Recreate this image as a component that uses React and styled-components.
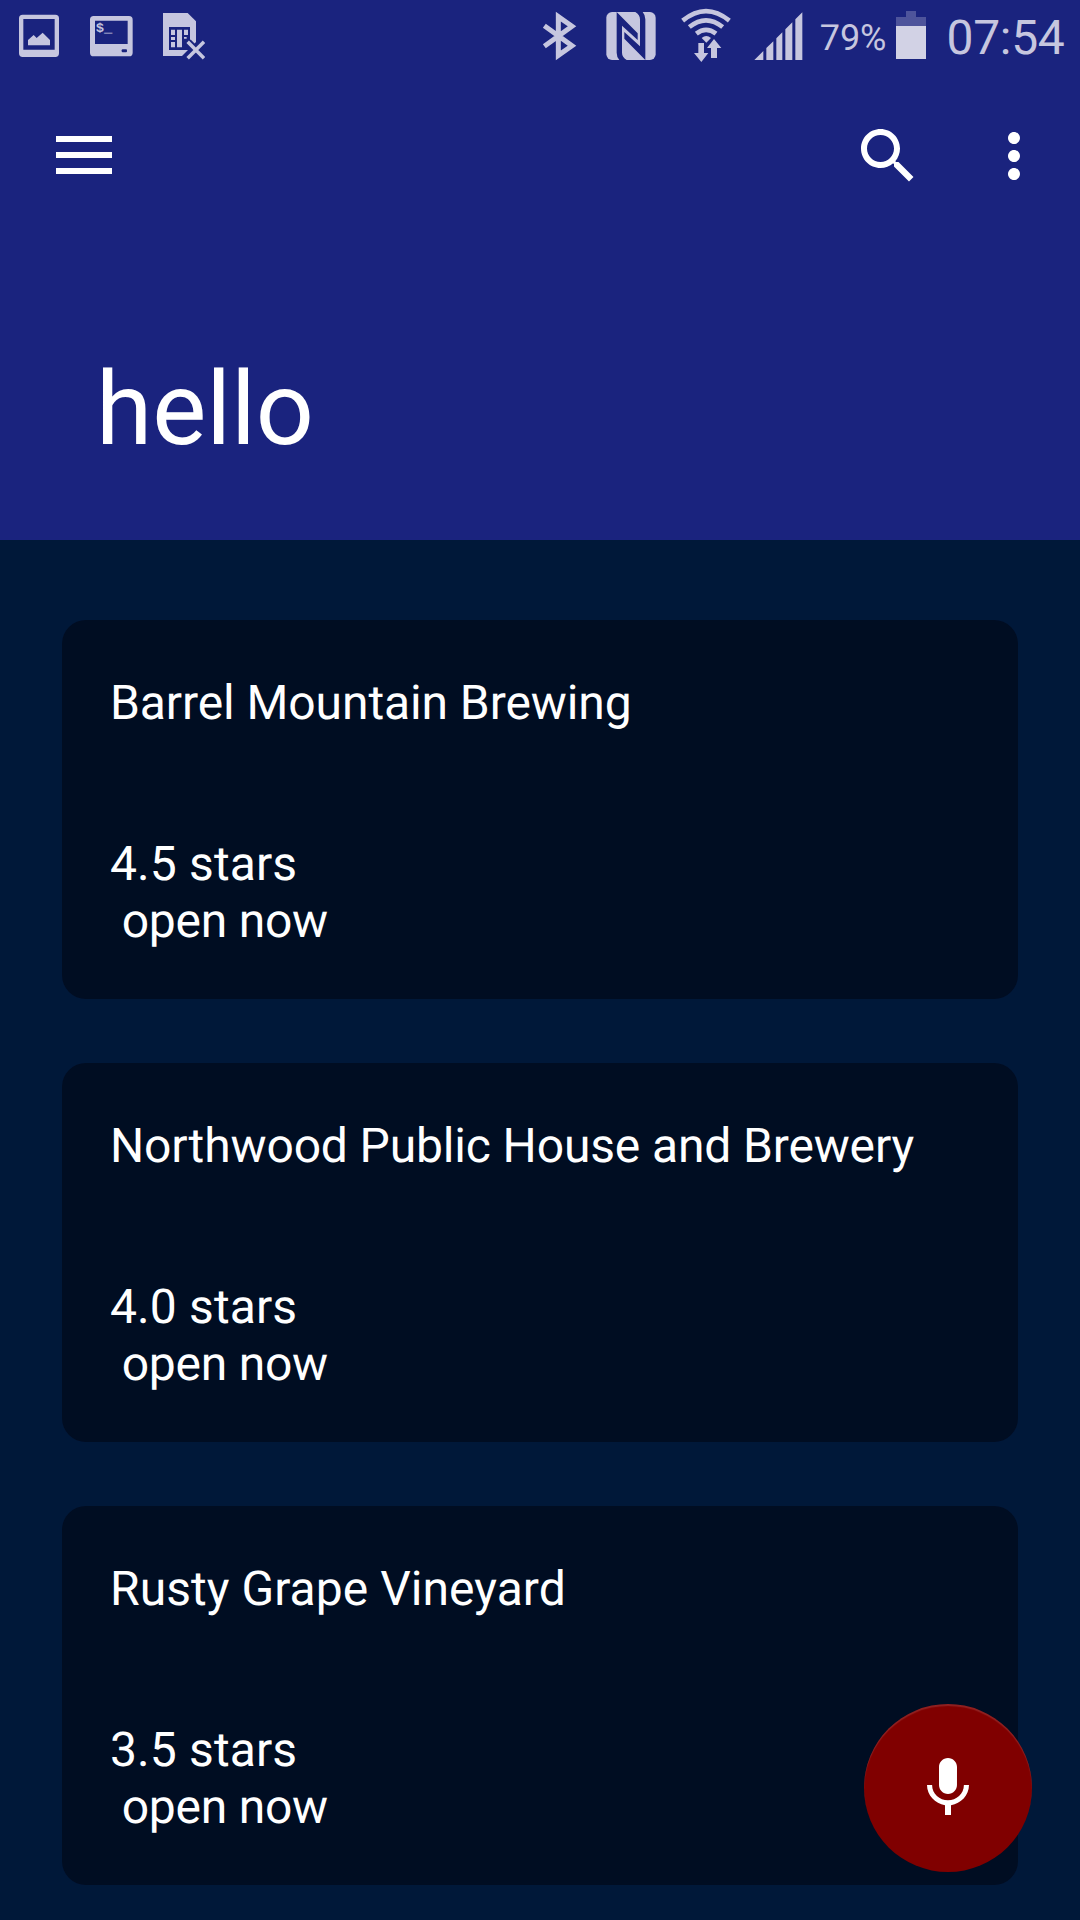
import React from "react";
import styled, { createGlobalStyle } from "styled-components";

const ink = "#c6c6df";
const primary = "#1a237e";

const GlobalStyle = createGlobalStyle`
  body { margin: 0; background: #001839; font-family: Roboto, "Noto Sans", sans-serif; text-rendering: geometricPrecision; }
  * { box-sizing: border-box; }
`;

const Screen = styled.main`
  position: relative;
  width: 1080px;
  height: 1920px;
  overflow: hidden;
  background: #001839;
  color: #fff;
`;

const Header = styled.header`
  height: 540px;
  display: flex;
  flex-direction: column;
  background: ${primary};
`;

const StatusBar = styled.div`
  height: 75px;
  display: flex;
  padding: 0 13px 0 18px;
  color: ${ink};
`;

const StatusGlyph = styled.svg`
  display: block;
  flex: none;
  height: 75px;
  width: ${(p) => p.$w}px;
  margin-left: ${(p) => p.$gap || 0}px;
  fill: ${ink};
`;

const StatusText = styled.span`
  flex: none;
  width: ${(p) => p.$w}px;
  margin-left: ${(p) => p.$gap}px;
  font-size: ${(p) => p.$size}px;
  font-weight: 400;
  line-height: ${(p) => p.$line}px;
  letter-spacing: ${(p) => p.$tracking || 0}px;
  white-space: nowrap;
`;

const Toolbar = styled.nav`
  height: 162px;
  display: flex;
  align-items: center;
  padding: 0 30px 0 48px;
`;

const IconButton = styled.button`
  display: flex;
  padding: 0;
  border: 0;
  background: none;
  color: #fff;
  margin-left: ${(p) => p.$push || "0"};
  svg { display: block; width: 72px; height: 72px; fill: currentColor; }
`;

const Title = styled.h1`
  margin: 112px 0 0 96px;
  font-size: 102px;
  font-weight: 400;
  line-height: 120px;
`;

const List = styled.section`
  display: flex;
  flex-direction: column;
  gap: 64px;
  padding: 80px 62px 0;
`;

const Card = styled.article`
  height: 379px;
  padding: 54px 48px;
  border-radius: 24px;
  background: #000d22;
  font-size: 48px;
  line-height: 57px;
`;

const Name = styled.h2`
  margin: 0 0 104px;
  font-size: inherit;
  font-weight: 400;
  letter-spacing: ${(p) => p.$tracking}px;
`;

const Detail = styled.p`
  margin: 0;
  white-space: pre;
  letter-spacing: ${(p) => p.$tracking}px;
`;

const MicButton = styled.button`
  position: absolute;
  left: 864px;
  top: 1704px;
  width: 168px;
  height: 168px;
  display: flex;
  align-items: center;
  justify-content: center;
  padding: 0;
  border: 0;
  border-radius: 50%;
  background: #800000;
  box-shadow: inset 0 2px 1px rgba(255, 255, 255, 0.13);
  svg { display: block; width: 72px; height: 72px; fill: #fff; }
`;

const places = [
  { name: "Barrel Mountain Brewing", rating: "4.5", tracking: -0.09 },
  { name: "Northwood Public House and Brewery", rating: "4.0", tracking: -0.145 },
  { name: "Rusty Grape Vineyard", rating: "3.5", tracking: 0.05 },
];

function StatusIcons() {
  return (
    <StatusBar>
      <StatusGlyph $w={42} viewBox="54 0 126 225">
        <path fillRule="evenodd" d="M68 44H166Q177 44 177 55V160Q177 171 166 171H68Q57 171 57 160V55Q57 44 68 44ZM70 57V149H164V57Z" />
        <path d="M84 136V120L101 105L110 114L128 98L150 120V136Z" />
      </StatusGlyph>
      <StatusGlyph $w={44} $gap={29} viewBox="267 0 132 225">
        <path fillRule="evenodd" d="M281 48H387Q398 48 398 59V158Q398 169 387 169H281Q270 169 270 158V59Q270 48 281 48ZM285 62V132H383V62Z" />
        <rect x="365" y="148" width="16" height="9" rx="3" fill={primary} />
        <text x="287" y="95" fontSize="39" fontWeight="700" fontFamily="Liberation Mono, monospace" textLength="50" lengthAdjust="spacingAndGlyphs">$_</text>
      </StatusGlyph>
      <StatusGlyph $w={43} $gap={29} viewBox="486 0 129 225">
        <path d="M489 39H563L588 64V126L546 168H489Z" />
        <path fill={primary} d="M507 81H570V150H507Z" />
        <path d="M513 89H525V105H513ZM531 89H546V142H531ZM552 89H564V105H552ZM513 111H525V120H513ZM513 126H525V142H513ZM552 111H560V116H552Z" />
        <path d="M564 126L611 174M611 126L564 174" stroke={primary} strokeWidth="22" />
        <path d="M563 125L612 175M612 125L563 175" stroke={ink} strokeWidth="10.5" />
      </StatusGlyph>
      <StatusGlyph $w={35} $gap={337} viewBox="66 0 105 225">
        <path d="M73 77L156 137L115 166V50L156 79L73 139" fill="none" stroke={ink} strokeWidth="15" />
      </StatusGlyph>
      <StatusGlyph $w={50} $gap={29} viewBox="258 0 150 225">
        <rect x="259" y="36" width="148" height="144" rx="17" />
        <g fill={primary}>
          <path d="M290 36L353 100V120L306 77V158Q306 171 320 180H298Q290 171 290 158Z" />
          <path d="M376 180L313 116V96L360 139V58Q360 45 346 36H368Q376 45 376 58Z" />
        </g>
      </StatusGlyph>
      <StatusGlyph $w={50} $gap={25} viewBox="483 0 150 225">
        <g fill="none" stroke={ink} strokeWidth="14">
          <path d="M488 62Q558 5 628 62" />
          <path d="M508 81Q558 41 608 81" />
          <path d="M529 101Q558 78 588 101" />
        </g>
        <path d="M545 114Q559 102 573 114L559 128Z" />
        <path d="M535 129H552V159H565L544 186L522 159H535Z" />
        <path d="M582 117L604 144H591V174H573V144H561Z" />
      </StatusGlyph>
      <StatusGlyph $w={49} $gap={22.67} viewBox="701 0 147 225">
        <path d="M702 180L729 153V180ZM738 144L759 124V180H738ZM768 115L786 97V180H768ZM795 88L816 67V180H795ZM825 58L846 37V180H825Z" />
      </StatusGlyph>
      <StatusText $w={66} $gap={17} $size={36} $line={76}>79%</StatusText>
      <StatusGlyph $w={30} $gap={10.33} viewBox="288 0 90 225">
        <path d="M318 33H348V51H378V78H288V51H318Z" opacity="0.3" />
        <path d="M288 78H378V177H288Z" fill="#d2d2e5" />
      </StatusGlyph>
      <StatusText $w={120} $gap={20.5} $size={48} $line={75} $tracking={-0.3}>07:54</StatusText>
    </StatusBar>
  );
}

export default function App() {
  return (
    <Screen>
      <GlobalStyle />
      <Header>
        <StatusIcons />
        <Toolbar>
          <IconButton aria-label="Menu">
            <svg viewBox="0 0 72 72"><path d="M8 16h56v6H8zM8 32h56v6H8zM8 48h56v6H8z" /></svg>
          </IconButton>
          <IconButton aria-label="Search" $push="auto">
            <svg viewBox="0 0 24 24"><path d="M15.5 14h-.79l-.28-.27C15.41 12.59 16 11.11 16 9.5 16 5.91 13.09 3 9.5 3S3 5.91 3 9.5 5.91 16 9.5 16c1.61 0 3.09-.59 4.23-1.57l.27.28v.79l5 4.99L20.49 19l-4.99-5zm-6 0C7.01 14 5 11.99 5 9.5S7.01 5 9.5 5 14 7.01 14 9.5 11.99 14 9.5 14z" /></svg>
          </IconButton>
          <IconButton aria-label="More options" $push="54px">
            <svg viewBox="0 0 24 24"><path d="M12 8c1.1 0 2-.9 2-2s-.9-2-2-2-2 .9-2 2 .9 2 2 2zm0 2c-1.1 0-2 .9-2 2s.9 2 2 2 2-.9 2-2-.9-2-2-2zm0 6c-1.1 0-2 .9-2 2s.9 2 2 2 2-.9 2-2-.9-2-2-2z" /></svg>
          </IconButton>
        </Toolbar>
        <Title>hello</Title>
      </Header>
      <List>
        {places.map((place) => (
          <Card key={place.name}>
            <Name $tracking={place.tracking}>{place.name}</Name>
            <Detail $tracking={0.12}>{place.rating} stars</Detail>
            <Detail $tracking={-0.24}> open now</Detail>
          </Card>
        ))}
      </List>
      <MicButton aria-label="Voice search">
        <svg viewBox="0 0 24 24"><path d="M12 14c1.66 0 2.99-1.34 2.99-3L15 5c0-1.66-1.34-3-3-3S9 3.34 9 5v6c0 1.66 1.34 3 3 3zm5.3-3c0 3-2.54 5.1-5.3 5.1S6.7 14 6.7 11H5c0 3.41 2.72 6.23 6 6.72V21h2v-3.28c3.28-.48 6-3.3 6-6.72h-1.7z" /></svg>
      </MicButton>
    </Screen>
  );
}
